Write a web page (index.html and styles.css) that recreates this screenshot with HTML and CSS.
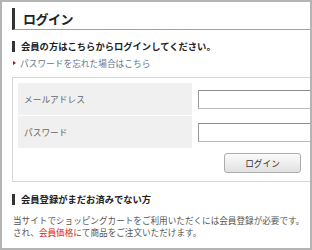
FILE: index.html
```html
<!DOCTYPE html>
<html lang="ja">
<head>
  <meta charset="UTF-8">
  <meta name="viewport" content="width=device-width, initial-scale=1.0">
  <title>ログイン</title>
  <link rel="stylesheet" href="styles.css">
</head>
<body>
  <div class="frame">
    <div class="page">
      <h1 class="page-title">ログイン</h1>

      <h2 class="section-title">会員の方はこちらからログインしてください。</h2>
      <p class="forgot"><a href="#">パスワードを忘れた場合はこちら</a></p>

      <div class="login-box">
        <table class="login-table">
          <tr>
            <th>メールアドレス</th>
            <td><input type="text" class="field"></td>
          </tr>
          <tr>
            <th>パスワード</th>
            <td><input type="password" class="field"></td>
          </tr>
        </table>
        <div class="btn-row">
          <button class="btn">ログイン</button>
        </div>
      </div>

      <h2 class="section-title section-title--second">会員登録がまだお済みでない方</h2>
      <p class="notice">
        当サイトでショッピングカートをご利用いただくには会員登録が必要です。<br>
        され、<span class="accent">会員価格</span>にて商品をご注文いただけます。
      </p>
    </div>
  </div>
</body>
</html>
```

FILE: styles.css
```css
body {
  margin: 0;
  padding: 0;
  background-color: #fff;
  font-family: "Noto Sans CJK JP", "Noto Sans", sans-serif;
  color: #555;
}

.frame {
  width: 308px;
  height: 246px;
  border: 2px solid #b4b4b4;
  overflow: hidden;
}

.page {
  width: 360px;
  padding: 6px 0 0 10px;
}

.page-title {
  margin: 0;
  height: 21px;
  line-height: 21px;
  padding-left: 8px;
  border-left: 3px solid #333;
  border-bottom: 1px solid #a0a0a0;
  font-size: 13px;
  font-weight: bold;
  color: #222;
  letter-spacing: -0.5px;
}

.section-title {
  margin: 11px 0 0;
  height: 11px;
  line-height: 11px;
  padding-left: 6px;
  border-left: 3px solid #333;
  font-size: 9.3px;
  font-weight: bold;
  color: #222;
}

.section-title--second {
  margin-top: 12px;
}

.forgot {
  margin: 6px 0 0;
  line-height: 12px;
  font-size: 8.7px;
  position: relative;
  padding-left: 8px;
}

.forgot::before {
  content: "";
  position: absolute;
  left: 1px;
  top: 3px;
  border-left: 3px solid #a11;
  border-top: 2.5px solid transparent;
  border-bottom: 2.5px solid transparent;
}

.forgot a {
  color: #66758c;
  text-decoration: none;
}

.login-box {
  margin-top: 7px;
  width: 320px;
  border: 1px solid #d6d6d6;
  padding: 4px 5px 8px;
}

.login-table {
  border-collapse: separate;
  border-spacing: 0 1px;
}

.login-table th {
  width: 168px;
  height: 32px;
  padding: 0 0 0 6px;
  background-color: #f0f0f0;
  text-align: left;
  font-weight: normal;
  font-size: 8.7px;
  color: #666;
}

.login-table td {
  padding: 0 0 0 6px;
  height: 32px;
}

.field {
  display: block;
  box-sizing: border-box;
  width: 140px;
  height: 19px;
  margin: 0;
  border: 1px solid #bbb;
  border-top-color: #8c8c8c;
  border-left-color: #9a9a9a;
  background: #fff;
}

.btn-row {
  display: flex;
  margin-top: 4px;
  padding-left: 206px;
}

.btn {
  box-sizing: border-box;
  width: 77px;
  height: 20px;
  padding: 0;
  border: 1px solid #acacac;
  border-radius: 3px;
  background: linear-gradient(#fbfbfb, #e1e1e1);
  font-family: inherit;
  font-size: 8.7px;
  color: #333;
}

.notice {
  margin: 10px 0 0 1px;
  line-height: 11.5px;
  font-size: 8.6px;
  color: #555;
  white-space: nowrap;
}

.accent {
  color: #d22;
}
```
